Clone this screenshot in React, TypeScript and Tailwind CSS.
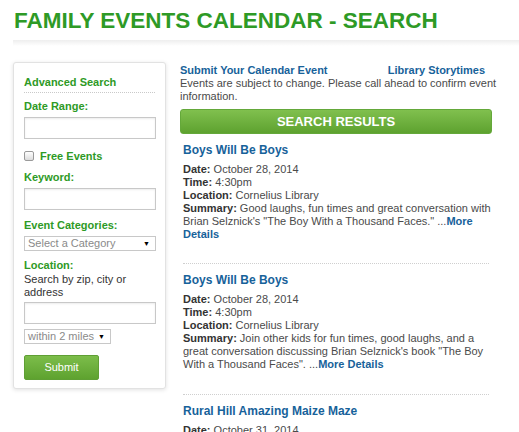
import React from 'react';

const green = "text-[#2e9a26]";

function Label({ children, className = "" }: { children: React.ReactNode; className?: string }) {
  return <div className={`text-[11px] leading-[14px] font-bold ${green} ${className}`}>{children}</div>;
}

function TextInput({ className = "" }: { className?: string }) {
  return <div className={`h-[22px] w-[132px] border border-[#c8c8c8] bg-white shadow-[inset_0_1px_2px_rgba(0,0,0,0.08)] ${className}`} />;
}

function FakeSelect({ label, width, className = "" }: { label: string; width: string; className?: string }) {
  return (
    <div className={`flex h-[15px] items-center justify-between border border-[#c8c8c8] bg-white pl-[3px] pr-[5px] ${width} ${className}`}>
      <span className="text-[11px] leading-[13px] text-[#8a8a8a]">{label}</span>
      <span className="text-[7px] leading-none text-black">▼</span>
    </div>
  );
}

type Event = {
  title: string;
  date: string;
  time: string;
  location: string;
  summary: React.ReactNode;
};

const events: Event[] = [
  {
    title: "Boys Will Be Boys",
    date: "October 28, 2014",
    time: "4:30pm",
    location: "Cornelius Library",
    summary: (
      <>
        Good laughs, fun times and great conversation with<br />
        Brian Selznick's "The Boy With a Thousand Faces." ...<a className="font-bold text-[#17629a]">More</a>
        <br />
        <a className="font-bold text-[#17629a]">Details</a>
      </>
    ),
  },
  {
    title: "Boys Will Be Boys",
    date: "October 28, 2014",
    time: "4:30pm",
    location: "Cornelius Library",
    summary: (
      <>
        Join other kids for fun times, good laughs, and a<br />
        great conversation discussing Brian Selznick's book "The Boy<br />
        With a Thousand Faces". ...<a className="font-bold text-[#17629a]">More Details</a>
      </>
    ),
  },
  {
    title: "Rural Hill Amazing Maize Maze",
    date: "October 31, 2014",
    time: "10:00am",
    location: "Rural Hill",
    summary: <>Fall fun in the maze.</>,
  },
];

function EventItem({ ev, last }: { ev: Event; last?: boolean }) {
  return (
    <div className="pl-[3px]">
      <div className="mt-[8px] text-[12px] leading-[17px] font-bold text-[#17629a]">{ev.title}</div>
      <div className="mt-[4px] text-[11px] leading-[12.9px] text-[#4a4a4a]">
        <div><b className="text-[#333]">Date:</b> {ev.date}</div>
        <div><b className="text-[#333]">Time:</b> {ev.time}</div>
        <div><b className="text-[#333]">Location:</b> {ev.location}</div>
        <div><b className="text-[#333]">Summary:</b> {ev.summary}</div>
      </div>
      {!last && <div className="mt-[23px] mr-[3px] border-b border-dotted border-[#cfcfcf]" />}
    </div>
  );
}

export default function App() {
  return (
    <div className="h-[432px] w-[519px] overflow-hidden bg-white font-['Liberation_Sans',Arial,sans-serif]">
      <h1 className={`pl-[14px] pt-[8px] text-[22.5px] leading-[26px] font-bold ${green}`}>
        FAMILY EVENTS CALENDAR - SEARCH
      </h1>
      <div className="ml-[13px] mt-[6px] h-[6px] bg-gradient-to-b from-[#eeeeee] to-white" />

      <div className="mt-[16px] flex items-start pl-[13px]">
        <aside className="w-[153px] rounded-[3px] border border-[#e2e2e2] bg-white px-[10px] pt-[12px] pb-[8px] shadow-[0_1px_4px_rgba(0,0,0,0.12)]">
          <Label className="pb-[3px] border-b border-dotted border-[#c9c9c9]">Advanced Search</Label>
          <Label className="mt-[6px]">Date Range:</Label>
          <TextInput className="mt-[4px]" />
          <div className="mt-[10px] flex items-center">
            <div className="h-[10px] w-[10px] rounded-[2px] border border-[#9a9a9a] bg-gradient-to-b from-white to-[#dcdcdc]" />
            <Label className="ml-[6px]">Free Events</Label>
          </div>
          <Label className="mt-[7px]">Keyword:</Label>
          <TextInput className="mt-[4px]" />
          <Label className="mt-[8px]">Event Categories:</Label>
          <FakeSelect label="Select a Category" width="w-[132px]" className="mt-[4px]" />
          <Label className="mt-[7px]">Location:</Label>
          <div className="mt-[1px] text-[11px] leading-[13px] text-[#333]">
            Search by zip, city or<br />address
          </div>
          <TextInput className="mt-[3px]" />
          <FakeSelect label="within 2 miles" width="w-[87px]" className="mt-[5px]" />
          <button className="mt-[11px] h-[25px] w-[75px] rounded-[2px] border border-[#5f9f34] bg-gradient-to-b from-[#7cbd4a] to-[#5ea22f] text-[11px] text-white">
            Submit
          </button>
        </aside>

        <main className="ml-[14px] w-[312px] pt-[1px]">
          <div className="flex justify-between text-[11px] leading-[14px] font-bold text-[#17629a]">
            <a>Submit Your Calendar Event</a>
            <a className="mr-[7px]">Library Storytimes</a>
          </div>
          <p className="whitespace-nowrap text-[11px] leading-[13px] text-[#4a4a4a]">
            Events are subject to change. Please call ahead to confirm event<br />information.
          </p>
          <div className="mt-[6px] flex h-[25px] items-center justify-center rounded-[3px] border border-[#64a83a] bg-gradient-to-b from-[#80c04e] to-[#5ea22f] text-[13px] font-bold text-white">
            SEARCH RESULTS
          </div>
          {events.map((ev, i) => (
            <EventItem key={i} ev={ev} last={i === events.length - 1} />
          ))}
        </main>
      </div>
    </div>
  );
}
